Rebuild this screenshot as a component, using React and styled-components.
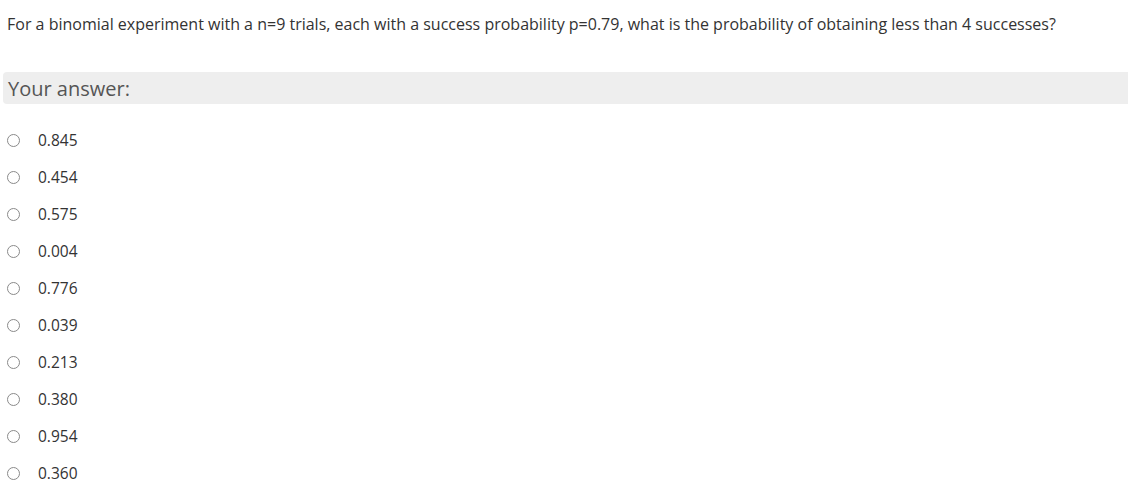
import React from "react";
import styled, { createGlobalStyle } from "styled-components";

const GlobalStyle = createGlobalStyle`
  body {
    margin: 0;
    background: #ffffff;
    font-family: "Open Sans", "Liberation Sans", sans-serif;
  }
`;

const Page = styled.div`
  padding: 12px 0 0 0;
  overflow: hidden;
`;

const Question = styled.p`
  margin: 0 0 0 7px;
  font-size: 16px;
  line-height: 24px;
  color: #333333;
`;

const AnswerHeader = styled.div`
  margin: 36px 0 0 3px;
  height: 32px;
  display: flex;
  align-items: center;
  padding-left: 5px;
  background: #eeeeee;
  border-radius: 4px 0 0 4px;
  font-size: 20px;
  color: #555555;
`;

const Options = styled.div`
  display: flex;
  flex-direction: column;
  margin-top: 25px;
  gap: 15px;
`;

const Option = styled.label`
  display: flex;
  align-items: center;
  height: 22px;
  font-size: 15.5px;
  color: #333333;
`;

const Radio = styled.span`
  box-sizing: border-box;
  width: 13px;
  height: 13px;
  margin-left: 7px;
  border: 1px solid #8a8a8a;
  border-radius: 50%;
  background: #fff;
`;

const Value = styled.span`
  margin-left: 18px;
`;

const answers = [
  "0.845",
  "0.454",
  "0.575",
  "0.004",
  "0.776",
  "0.039",
  "0.213",
  "0.380",
  "0.954",
  "0.360",
];

const App = () => {
  return (
    <>
      <GlobalStyle />
      <Page>
        <Question>
          For a binomial experiment with a n=9 trials, each with a success
          probability p=0.79, what is the probability of obtaining less than 4
          successes?
        </Question>
        <AnswerHeader>Your answer:</AnswerHeader>
        <Options>
          {answers.map((a) => (
            <Option key={a}>
              <Radio />
              <Value>{a}</Value>
            </Option>
          ))}
        </Options>
      </Page>
    </>
  );
};

export default App;
